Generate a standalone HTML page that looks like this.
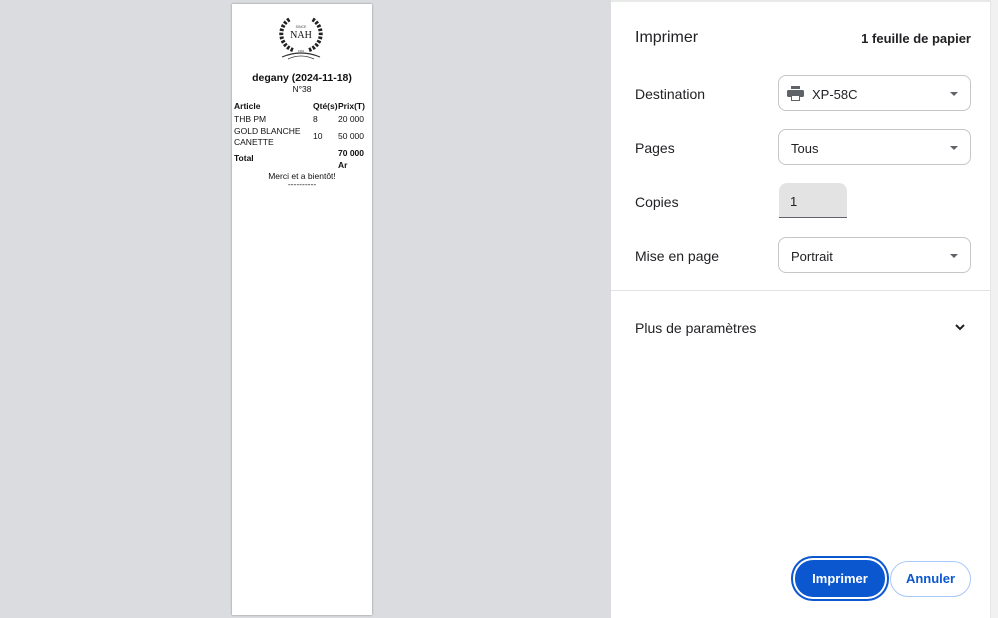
<!DOCTYPE html>
<html><head><meta charset="utf-8"><style>
*{margin:0;padding:0;box-sizing:border-box}
body{width:998px;height:618px;overflow:hidden;background:#dadce0;font-family:"Liberation Sans",sans-serif;position:relative}
.paper{position:absolute;left:232px;top:4px;width:140px;height:611px;background:#fff;box-shadow:0 0 2px rgba(0,0,0,.4);font-size:8.5px;color:#111}
.panel{position:absolute;left:611px;top:0;width:379px;height:618px;background:#fff;border-top:2px solid #e8eae8}
.sb{position:absolute;left:990px;top:0;width:8px;height:618px;background:#f1f1f1;border-left:1px solid #e6e6e6}
.lbl{position:absolute;left:24px;font-size:14px;color:#202124}
.sel{position:absolute;left:167px;width:193px;height:36px;border:1px solid #c4c7c5;border-radius:8px;font-size:13px;color:#202124}
.sel span{position:absolute;top:11px;left:12px}
.arr{position:absolute;right:12px;top:16px;width:0;height:0;border-left:4px solid transparent;border-right:4px solid transparent;border-top:4px solid #5f6368}
.btn{position:absolute;top:561px;height:36px;border-radius:18px;font-size:13px;font-weight:bold;text-align:center;line-height:34px}
</style></head><body>
<div class="paper">
 <svg style="position:absolute;left:46px;top:9px" width="46" height="48" viewBox="0 0 46 48">
  <g fill="none" stroke="#222" stroke-width="4" stroke-dasharray="2.5 1.5">
   <path d="M15 37 A17 17 0 0 1 12 6"/><path d="M31 37 A17 17 0 0 0 34 6"/>
  </g>
  <text x="23" y="25" font-size="10" font-family="Liberation Serif" text-anchor="middle" fill="#111">NAH</text>
  <text x="23" y="15" font-size="3.5" text-anchor="middle" fill="#444">SINCE</text>
  <text x="23" y="39" font-size="3" text-anchor="middle" fill="#444">1991</text>
  <path d="M4 44 Q23 36 42 44" stroke="#333" fill="none" stroke-width="1.2"/>
  <path d="M10 46 Q23 40 36 46" stroke="#333" fill="none" stroke-width="0.8"/>
 </svg>
 <div style="position:absolute;top:68px;width:100%;text-align:center;font-size:10.5px;font-weight:bold">degany (2024-11-18)</div>
 <div style="position:absolute;top:80px;width:100%;text-align:center;font-size:8.5px">N°38</div>
 <div style="position:absolute;top:97px;left:2px;font-weight:bold">Article</div>
 <div style="position:absolute;top:97px;left:81px;font-weight:bold">Qté(s)</div>
 <div style="position:absolute;top:97px;left:106px;font-weight:bold">Prix(T)</div>
 <div style="position:absolute;top:110px;left:2px">THB PM</div>
 <div style="position:absolute;top:110px;left:81px">8</div>
 <div style="position:absolute;top:110px;left:106px">20 000</div>
 <div style="position:absolute;top:122px;left:2px;line-height:11px">GOLD BLANCHE<br>CANETTE</div>
 <div style="position:absolute;top:127px;left:81px">10</div>
 <div style="position:absolute;top:127px;left:106px">50 000</div>
 <div style="position:absolute;top:149px;left:2px;font-weight:bold">Total</div>
 <div style="position:absolute;top:143px;left:106px;font-weight:bold;line-height:12px">70 000<br>Ar</div>
 <div style="position:absolute;top:167px;width:100%;text-align:center">Merci et a bientôt!</div>
 <div style="position:absolute;top:175px;width:100%;text-align:center">----------</div>
</div>
<div class="panel">
 <div class="lbl" style="top:27px;font-size:16px">Imprimer</div>
 <div style="position:absolute;right:19px;top:29px;font-size:13px;color:#202124;font-weight:600">1 feuille de papier</div>
 <div class="lbl" style="top:84px">Destination</div>
 <div class="sel" style="top:73px">
  <svg style="position:absolute;left:8px;top:10px" width="17" height="15" viewBox="0 0 17 15"><rect x="4" y="0" width="9" height="3" fill="#5f6368"/><rect x="0" y="4" width="17" height="7" rx="1.5" fill="#5f6368"/><rect x="4" y="9" width="9" height="6" fill="#5f6368"/><rect x="5" y="10" width="7" height="4" fill="#fff"/></svg>
  <span style="left:33px">XP-58C</span><div class="arr"></div></div>
 <div class="lbl" style="top:138px">Pages</div>
 <div class="sel" style="top:127px"><span>Tous</span><div class="arr"></div></div>
 <div class="lbl" style="top:192px">Copies</div>
 <div style="position:absolute;left:168px;top:181px;width:68px;height:35px;background:#e3e3e3;border-radius:8px 8px 0 0;border-bottom:1px solid #5f6368;font-size:13px;padding:11px 0 0 11px;color:#202124">1</div>
 <div class="lbl" style="top:246px">Mise en page</div>
 <div class="sel" style="top:235px"><span>Portrait</span><div class="arr"></div></div>
 <div style="position:absolute;left:0;top:288px;width:379px;height:1px;background:#e3e3e3"></div>
 <div class="lbl" style="top:318px">Plus de paramètres</div>
 <svg style="position:absolute;left:343px;top:320px" width="12" height="10" viewBox="0 0 12 10"><path d="M2 3 L6 7 L10 3" stroke="#202124" stroke-width="2" fill="none"/></svg>
 <div class="btn" style="left:184px;width:90px;background:#0b57d0;color:#fff;box-shadow:0 0 0 2px #fff,0 0 0 4px #0b57d0;top:558px;height:37px;line-height:37px">Imprimer</div>
 <div class="btn" style="left:279px;width:81px;border:1px solid #a8c7fa;color:#0b57d0;top:559px">Annuler</div>
</div>
<div class="sb"></div>
</body></html>
